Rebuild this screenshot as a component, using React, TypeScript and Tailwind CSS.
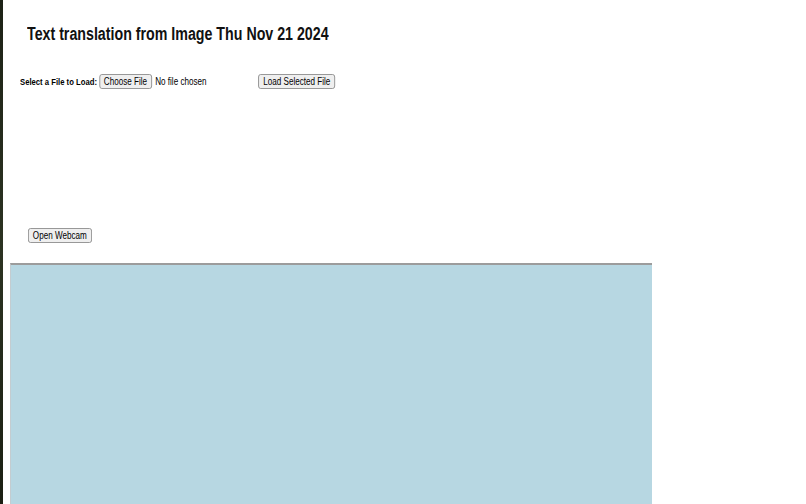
import React from 'react'

// the capture is squeezed horizontally, so text rows get a scale-x
const btn =
  "flex h-[15px] items-center rounded-[3px] border border-[#8d8d8d] bg-[#efefef] px-[5px] text-[10px] leading-[11px] text-black font-['Liberation_Sans',Arial,sans-serif]"

export default function App() {
  return (
    <div className="flex h-[504px] w-[806px] overflow-hidden bg-white font-['Liberation_Sans',Arial,sans-serif]">
      {/* desktop peeking through on the left */}
      <div className="w-[3px] shrink-0 bg-gradient-to-b from-[#1d2216] via-[#2c3322] to-[#1b2013]" />

      <div className="flex flex-1 flex-col">
        <h1 className="ml-[24px] mt-[23px] h-[22px] origin-left scale-x-[0.79] whitespace-nowrap text-[18px] font-bold leading-[22px] text-[#111]">
          Text translation from Image Thu Nov 21 2024
        </h1>

        <div className="ml-[17px] mt-[29px] flex h-[15px] origin-left scale-x-[0.81] items-center whitespace-nowrap">
          <label className="text-[9.5px] font-bold leading-[11px] text-black">Select a File to Load:</label>
          <button className={`${btn} ml-[2.5px]`}>Choose File</button>
          <span className="ml-[4px] text-[10px] leading-[11px] text-black">No file chosen</span>
          <button className={`${btn} ml-[64px]`}>Load Selected File</button>
        </div>

        <div className="ml-[25px] mt-[139px] flex h-[15px] origin-left scale-x-[0.81]">
          <button className={btn}>Open Webcam</button>
        </div>

        <div className="ml-[7px] mt-[20px] w-[642px] flex-1 border-l border-t-2 border-[#9c9c9c] border-l-[#c4ccd0] bg-[#b7d7e2]" />
      </div>
    </div>
  )
}
